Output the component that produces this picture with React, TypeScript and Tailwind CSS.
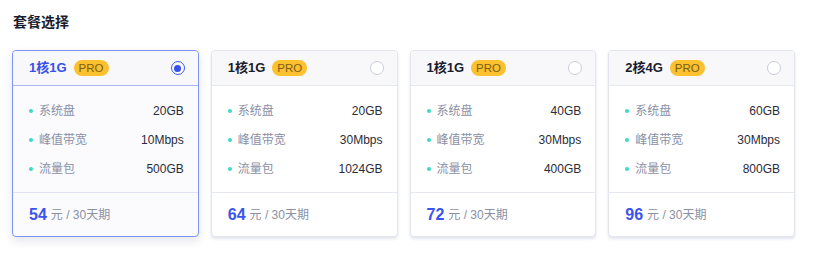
import React from 'react';

interface Plan {
  name: string;
  disk: string;
  bandwidth: string;
  traffic: string;
  price: number;
}

const plans: Plan[] = [
  { name: '1核1G', disk: '20GB', bandwidth: '10Mbps', traffic: '500GB', price: 54 },
  { name: '1核1G', disk: '20GB', bandwidth: '30Mbps', traffic: '1024GB', price: 64 },
  { name: '1核1G', disk: '40GB', bandwidth: '30Mbps', traffic: '400GB', price: 72 },
  { name: '2核4G', disk: '60GB', bandwidth: '30Mbps', traffic: '800GB', price: 96 },
];

function PlanCard({ plan, selected }: { plan: Plan; selected: boolean }) {
  const rows = [
    ['系统盘', plan.disk],
    ['峰值带宽', plan.bandwidth],
    ['流量包', plan.traffic],
  ];
  return (
    <div
      className={
        selected
          ? 'rounded-[4px] border border-[#7f93f2] bg-[#fbfbfd] shadow-[0_4px_10px_rgba(30,40,90,0.12)]'
          : 'rounded-[4px] border border-[#e2e4ee] bg-white shadow-[0_2px_3px_rgba(60,70,120,0.14)]'
      }
    >
      {/* header */}
      <div
        className={
          'h-[35px] flex items-center pl-4 pr-[13px] rounded-t-[4px] bg-[#f8f8fa] border-b ' +
          (selected ? 'border-[#a9b6f5]' : 'border-[#e6e8f0]')
        }
      >
        <span className={'text-[13px] font-bold ' + (selected ? 'text-[#3650ea]' : 'text-[#1b1d2e]')}>
          {plan.name}
        </span>
        <span className="ml-[7px] h-[16px] px-[5px] rounded-full bg-[#fbc12e] text-[#7d5d14] text-[11.5px] leading-[16px]">
          PRO
        </span>
        <span className="ml-auto">
          {selected ? (
            <span className="flex items-center justify-center w-[14px] h-[14px] rounded-full border border-[#3e5cf0]">
              <span className="w-[7px] h-[7px] rounded-full bg-[#3650ea]" />
            </span>
          ) : (
            <span className="block w-[14px] h-[14px] rounded-full border border-[#c9ccd9] bg-white" />
          )}
        </span>
      </div>
      {/* specs */}
      <div className="pl-4 pr-[14px] pt-[10px] pb-[9px] flex flex-col">
        {rows.map(([label, value]) => (
          <div key={label} className="h-[29px] flex items-center text-[12px]">
            <span className="w-[4px] h-[4px] rounded-full bg-[#3dd9c7] mr-[6px]" />
            <span className="text-[#8a90a6]">{label}</span>
            <span className="ml-auto text-[#2a2c3a]">{value}</span>
          </div>
        ))}
      </div>
      {/* price */}
      <div className={'h-[44px] flex items-center px-4 border-t ' + (selected ? 'border-[#dfe3f5]' : 'border-[#e6e8f0]')}>
        <span className="text-[16px] font-bold text-[#3a55ec]">{plan.price}</span>
        <span className="ml-[4px] text-[12px] text-[#8a90a6]">元 / 30天期</span>
      </div>
    </div>
  );
}

export default function App() {
  return (
    <div
      className="w-[828px] h-[255px] bg-white px-3 pt-[12px]"
      style={{ fontFamily: '"Liberation Sans", "Noto Sans CJK SC", sans-serif' }}
    >
      <h2 className="text-[14px] font-bold text-[#1b1d2e] leading-[20px] ml-[1px]">套餐选择</h2>
      <div className="mt-[18px] w-[783px] grid grid-cols-4 gap-[12px]">
        {plans.map((p, i) => (
          <PlanCard key={i} plan={p} selected={i === 0} />
        ))}
      </div>
    </div>
  );
}
